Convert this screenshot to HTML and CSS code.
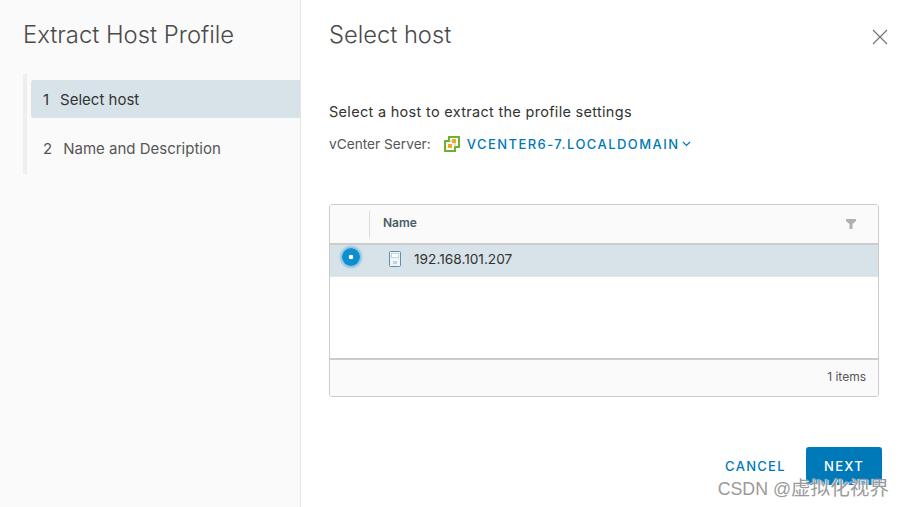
FILE: index.html
```html
<!DOCTYPE html>
<html lang="en">
<head>
    <meta charset="UTF-8">
    <title>Extract Host Profile</title>
    <link rel="stylesheet" href="styles.css">
</head>
<body>

<div class="wizard">
    <aside class="sidebar">
        <h1 class="wizard-title">Extract Host Profile</h1>
        <ul class="steps">
            <li class="step active"><span class="step-num">1</span>Select host</li>
            <li class="step"><span class="step-num">2</span>Name and Description</li>
        </ul>
    </aside>

    <main class="content">
        <div class="content-head">
            <h2 class="page-title">Select host</h2>
            <svg class="close-icon" width="16" height="16" viewBox="0 0 16 16">
                <path d="M1 1L15 15M15 1L1 15" stroke="#747474" stroke-width="1.2" fill="none"/>
            </svg>
        </div>

        <p class="lead">Select a host to extract the profile settings</p>
        <div class="server-row">
            <span class="server-label">vCenter Server:</span>
            <svg class="vc-icon" width="16" height="16" viewBox="0 0 16 16">
                <path d="M5 1H15V11H11V15H1V5H5Z" fill="#fff" stroke="#6fb02c" stroke-width="2"/>
                <path d="M5 5H11V11" fill="none" stroke="#a9d07c" stroke-width="1"/>
                <rect x="8" y="3" width="4" height="4" fill="#f5a623"/>
                <rect x="4" y="8" width="4" height="4" fill="#f5a623"/>
            </svg>
            <a class="server-link">VCENTER6-7.LOCALDOMAIN</a>
            <svg class="caret" width="9" height="6" viewBox="0 0 9 6">
                <path d="M1 1L4.5 4.5L8 1" stroke="#0079b8" stroke-width="1.2" fill="none"/>
            </svg>
        </div>

        <div class="grid">
            <div class="grid-head">
                <div class="select-col"></div>
                <div class="name-col">Name</div>
                <svg class="filter-icon" width="10" height="10" viewBox="0 0 10 10">
                    <path d="M0 0H10V2L6.5 5V10H3.5V5L0 2Z" fill="#b0b0b0"/>
                </svg>
            </div>
            <div class="grid-body">
                <div class="grid-row selected">
                    <span class="radio"></span>
                    <svg class="host-icon" width="12" height="16" viewBox="0 0 12 16">
                        <rect x="0.5" y="0.5" width="11" height="15" rx="1" fill="#eef4f8" stroke="#5f8fae"/>
                        <rect x="2.5" y="2.5" width="7" height="4" fill="#fff" stroke="#b5cddb" stroke-width="0.8"/>
                        <rect x="4" y="10" width="4" height="3" fill="#c3d3dd"/>
                    </svg>
                    <span class="host-name">192.168.101.207</span>
                </div>
            </div>
            <div class="grid-foot">1 items</div>
        </div>

        <div class="actions">
            <button class="btn btn-link">CANCEL</button>
            <button class="btn btn-primary">NEXT</button>
        </div>
    </main>
</div>

<div class="watermark">CSDN @<span class="watermark-cjk">虚拟化视界</span></div>

</body>
</html>
```

FILE: styles.css
```css
html, body {
    height: 100%;
}
body {
    margin: 0;
    font-family: 'Inter', 'Liberation Sans', sans-serif;
    color: #333;
    background: #fff;
    overflow: hidden;
    position: relative;
}
.wizard {
    display: flex;
    height: 507px;
}
.sidebar {
    width: 300px;
    flex: none;
    background: #fafafa;
    border-right: 1px solid #e4e4e4;
}
.wizard-title {
    margin: 0;
    padding: 20px 0 0 23px;
    font-size: 23.8px;
    line-height: 30px;
    font-weight: 300;
    color: #4a4a4a;
}
.steps {
    list-style: none;
    margin: 24px 0 0 23px;
    padding: 6px 0 6px 4px;
    border-left: 4px solid #eeeeee;
    height: 88px;
}
.step {
    display: flex;
    align-items: center;
    height: 38px;
    padding-left: 12px;
    font-size: 15px;
    color: #565656;
    border-radius: 3px 0 0 3px;
    margin-bottom: 11px;
}
.step.active {
    background: #d8e3e9;
    color: #333;
}
.step-num {
    margin-right: 11px;
}
.content {
    flex: 1;
    min-width: 0;
    padding: 0 25px 0 28px;
    display: flex;
    flex-direction: column;
}
.content-head {
    display: flex;
    justify-content: space-between;
    align-items: center;
    padding-top: 20px;
}
.page-title {
    margin: 0;
    font-size: 23.7px;
    line-height: 30px;
    font-weight: 300;
    color: #4a4a4a;
}
.close-icon {
    margin-top: 4px;
    margin-right: -9px;
}
.lead {
    margin: 52px 0 0;
    font-size: 14.5px;
    letter-spacing: 0.3px;
    line-height: 20px;
    color: #333;
}
.server-row {
    display: flex;
    align-items: center;
    margin-top: 12px;
    height: 20px;
}
.server-label {
    font-size: 13.7px;
    color: #565656;
    margin-right: 13px;
}
.vc-icon {
    margin-right: 7px;
}
.server-link {
    font-size: 13px;
    font-weight: 500;
    letter-spacing: 1.45px;
    color: #0079b8;
}
.caret {
    margin-left: 2px;
}
.grid {
    margin-top: 50px;
    width: 550px;
    height: 193px;
    box-sizing: border-box;
    border: 1px solid #ccc;
    border-radius: 3px;
    display: flex;
    flex-direction: column;
}
.grid-head {
    display: flex;
    align-items: center;
    height: 38px;
    flex: none;
    background: #fafafa;
    border-bottom: 2px solid #ccc;
}
.select-col {
    width: 39px;
    height: 27px;
    border-right: 1px solid #ddd;
}
.name-col {
    flex: 1;
    padding: 0 0 4px 13px;
    font-size: 12px;
    font-weight: 600;
    color: #4a5a66;
}
.filter-icon {
    margin-right: 22px;
    margin-top: -1px;
}
.grid-body {
    flex: 1;
}
.grid-row {
    display: flex;
    align-items: center;
    height: 32px;
}
.grid-row.selected {
    background: #d8e3e9;
    border-bottom: 1px solid #e4e4e4;
    box-sizing: border-box;
    padding-bottom: 3px;
}
.radio {
    width: 18px;
    height: 18px;
    margin: -5px 0 0 12px;
    box-sizing: border-box;
    border-radius: 50%;
    background: radial-gradient(circle, #fff 0 2px, #0d8ecf 2.6px);
    box-shadow: 0 0 2px 2px #8cc4e4;
}
.host-icon {
    margin-left: 29px;
}
.host-name {
    margin-left: 13px;
    font-size: 13.7px;
    color: #333;
}
.grid-foot {
    height: 38px;
    flex: none;
    box-sizing: border-box;
    background: #fafafa;
    border-top: 2px solid #ccc;
    border-radius: 0 0 3px 3px;
    display: flex;
    align-items: center;
    justify-content: flex-end;
    padding: 0 12px 3px 0;
    font-size: 12px;
    color: #565656;
}
.actions {
    display: flex;
    justify-content: flex-end;
    align-items: flex-start;
    margin-top: 50px;
    width: 553px;
    gap: 20px;
}
.btn {
    font-family: inherit;
    font-size: 13px;
    font-weight: 500;
    letter-spacing: 1.3px;
    height: 38px;
    border: none;
    border-radius: 3px;
    padding: 0;
    background: none;
}
.btn-link {
    color: #0079b8;
    width: 61px;
}
.btn-primary {
    width: 76px;
    background: #0079b8;
    color: #fff;
}
.watermark {
    position: absolute;
    right: 15px;
    top: 476px;
    font-family: 'Liberation Sans', 'Noto Sans CJK SC', sans-serif;
    font-size: 17.8px;
    line-height: 24px;
    color: #9a9a9a;
    text-shadow: 1px 1px 1px #fff, -1px 0 1px #fff;
}
.watermark-cjk {
    font-size: 19.6px;
}
```
